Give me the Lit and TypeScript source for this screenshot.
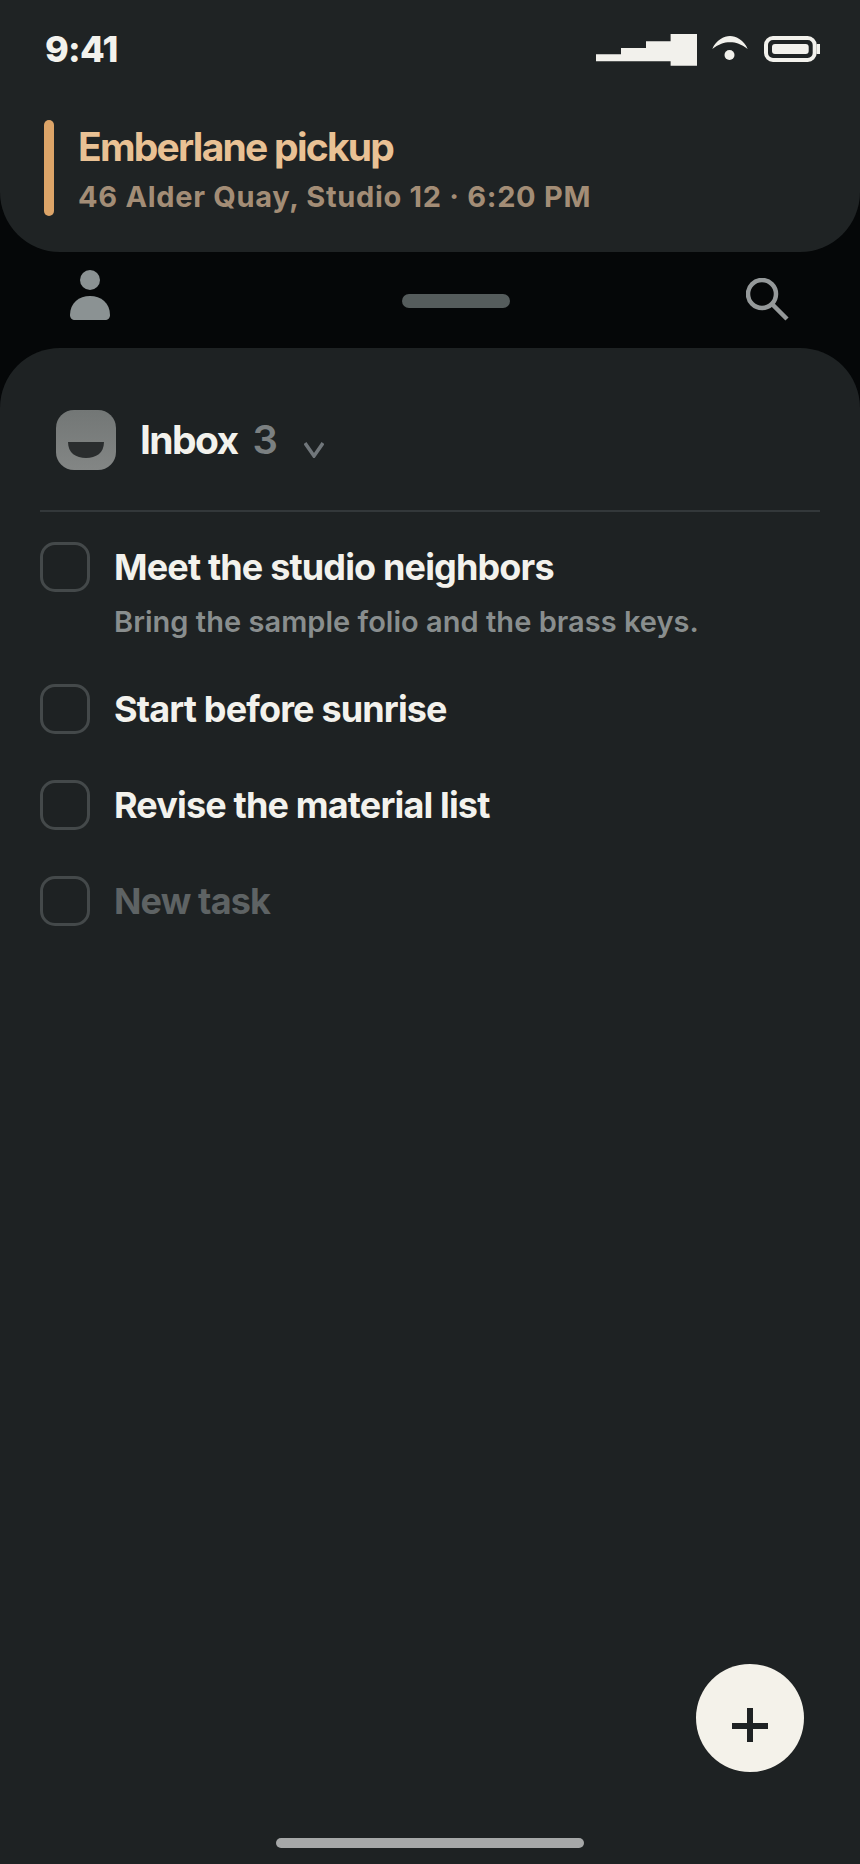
import { LitElement, html, css } from "lit";
import { customElement } from "lit/decorators.js";

const tasks = [
  { title: "Meet the studio neighbors", note: "Bring the sample folio and the brass keys." },
  { title: "Start before sunrise" },
  { title: "Revise the material list" },
  { title: "New task", ghost: true },
];

@customElement("app-root")
export class AppRoot extends LitElement {
  static styles = css`
    :host { display: block; width: 860px; height: 1864px; overflow: hidden; position: relative; background: #050708; font-family: Inter, "Liberation Sans", sans-serif; color: #f3f2ed; }
    .top { height: 252px; box-sizing: border-box; background: #1f2324; border-radius: 0 0 60px 60px; padding: 0 40px 0 44px; display: flex; flex-direction: column; }
    .status { height: 100px; display: flex; align-items: center; justify-content: space-between; padding-bottom: 2px; box-sizing: border-box; }
    .time { font-size: 36px; font-weight: 800; line-height: 44px; letter-spacing: -0.7px; margin-left: 1px; }
    .status svg { display: block; }
    .event { display: flex; gap: 24px; height: 96px; margin-top: 20px; }
    .bar { width: 10px; height: 96px; border-radius: 5px; background: #dca468; flex: none; }
    .event-text { display: flex; flex-direction: column; }
    .event-title { font-size: 39px; font-weight: 700; line-height: 46px; letter-spacing: -1.75px; color: #e9c194; margin-top: 4px; }
    .event-sub { font-size: 29px; font-weight: 650; line-height: 36px; letter-spacing: 0.69px; color: #a38d76; margin-top: 9px; }
    .nav { height: 96px; display: flex; align-items: center; justify-content: space-between; padding: 0 70px; box-sizing: border-box; }
    .pill { width: 108px; height: 14px; border-radius: 7px; background: #555c5c; margin: 2px 0 0 56px; }
    .nav svg { display: block; }
    .person { margin-bottom: 10px; }
    .panel { height: 1516px; box-sizing: border-box; background: #1e2223; border-radius: 60px 60px 0 0; padding: 0 40px; }
    .head { height: 164px; box-sizing: border-box; border-bottom: 2px solid #33383a; display: flex; align-items: center; padding: 21px 0 0 16px; }
    .list-icon { display: block; flex: none; }
    .head-name { margin-left: 24px; font-size: 39px; font-weight: 700; letter-spacing: -1.6px; line-height: 46px; }
    .head-count { margin-left: 15px; font-size: 40px; font-weight: 600; line-height: 46px; color: #7b8081; }
    .chev { margin-left: 26px; margin-top: 20px; display: block; }
    .rows { display: flex; flex-direction: column; }
    .row { display: flex; gap: 24px; margin-bottom: 46px; }
    .row:first-child { padding-top: 30px; }
    .check { width: 50px; height: 50px; box-sizing: border-box; flex: none; border: 3px solid #44494a; border-radius: 15px; }
    .row-text { display: flex; flex-direction: column; }
    .title { font-size: 36px; font-weight: 650; line-height: 50px; letter-spacing: -0.85px; color: #f3f2ed; }
    .ghost { color: #5e6364; }
    .note { font-size: 29px; font-weight: 620; line-height: 36px; margin-top: 12px; margin-bottom: -2px; letter-spacing: 0.03px; color: #898e8e; }
    .fab { position: absolute; left: 696px; top: 1664px; width: 108px; height: 108px; border-radius: 50%; background: #f4f2ea; display: flex; align-items: center; justify-content: center; }
    .fab svg { display: block; margin-top: 16px; }
    .home { position: absolute; left: 276px; top: 1838px; width: 308px; height: 10px; border-radius: 5px; background: #a6a8a8; }
  `;

  render() {
    return html`
      <section class="top">
        <div class="status">
          <span class="time">9:41</span>
          <svg width="230" height="40" viewBox="0 0 230 40" fill="#f2f1ec">
            <path d="M6 32.300V25.300H31V19H56V12.300H80.600V5H107V36.700H80.600V32.300Z"/>
            <path d="M122.300 20C126 11 134 7 140 7C146 7 154 11 157.700 20C151 15 146 13.300 140 13.300C134 13.300 129 15 122.300 20Z"/>
            <circle cx="139.500" cy="26" r="5"/>
            <rect x="176" y="9" width="48.700" height="22" rx="7" fill="none" stroke="#f2f1ec" stroke-width="4"/>
            <rect x="182" y="15" width="36.700" height="10" rx="3"/>
            <rect x="226.700" y="15" width="3.300" height="10"/>
          </svg>
        </div>
        <div class="event">
          <div class="bar"></div>
          <div class="event-text">
            <span class="event-title">Emberlane pickup</span>
            <span class="event-sub">46 Alder Quay, Studio 12 · 6:20 PM</span>
          </div>
        </div>
      </section>
      <nav class="nav">
        <svg class="person" width="40" height="50" viewBox="0 0 40 50" fill="#8b9293">
          <circle cx="20" cy="10" r="10"/>
          <path d="M0 45C0 33 9 26 20 26s20 7 20 19c0 3-2 5-5 5H5c-3 0-5-2-5-5z"/>
        </svg>
        <div class="pill"></div>
        <svg width="44" height="44" viewBox="0 0 44 44" fill="none" stroke="#95999a" stroke-width="4.500">
          <circle cx="16" cy="16" r="14"/>
          <path d="M26 26l15 15" />
        </svg>
      </nav>
      <main class="panel">
        <header class="head">
          <svg class="list-icon" width="60" height="60" viewBox="0 0 60 60">
            <defs><linearGradient id="g" x1="0" y1="0" x2="0" y2="1"><stop offset="0" stop-color="#737776"/><stop offset="1" stop-color="#838685"/></linearGradient></defs>
            <rect width="60" height="60" rx="18" fill="url(#g)"/>
            <path d="M12 32h36c0 11-8 16-18 16s-18-5-18-16z" fill="#2a2d2e"/>
          </svg>
          <span class="head-name">Inbox</span>
          <span class="head-count">3</span>
          <svg class="chev" width="20" height="16" viewBox="0 0 20 16" fill="none" stroke="#70767a" stroke-width="3.500"><path d="M1 1l9 13 9-13"/></svg>
        </header>
        <div class="rows">
          ${tasks.map(
            (t) => html`
              <div class="row">
                <div class="check"></div>
                <div class="row-text">
                  <span class="title ${t.ghost ? "ghost" : ""}">${t.title}</span>
                  ${t.note ? html`<span class="note">${t.note}</span>` : ""}
                </div>
              </div>
            `
          )}
        </div>
      </main>
      <div class="fab">
        <svg width="36" height="36" viewBox="0 0 36 36" fill="#1e2223"><rect x="0" y="15" width="36" height="6"/><rect x="15" y="0" width="6" height="34"/></svg>
      </div>
      <div class="home"></div>
    `;
  }
}
